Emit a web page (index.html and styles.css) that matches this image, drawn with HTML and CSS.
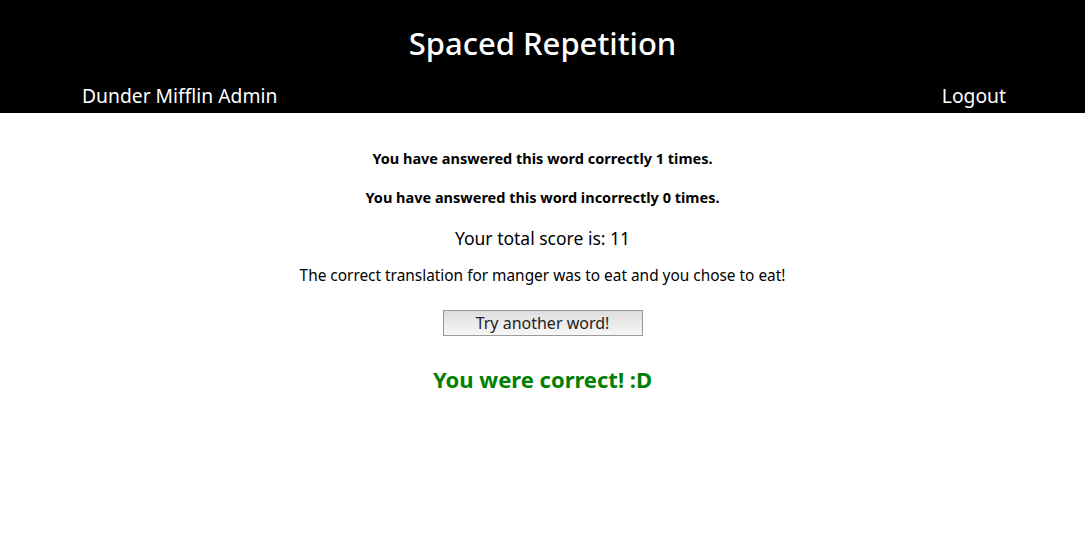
FILE: index.html
```html
<!DOCTYPE html>
<html>
<head>
<meta charset="utf-8">
<link rel="stylesheet" href="styles.css">
</head>
<body>
<header class="site-header">
  <h1 class="title">Spaced Repetition</h1>
  <nav class="nav">
    <span class="nav-user">Dunder Mifflin Admin</span>
    <a class="nav-link" href="#">Logout</a>
  </nav>
</header>
<main class="feedback">
  <h4 class="stat">You have answered this word correctly 1 times.</h4>
  <h4 class="stat">You have answered this word incorrectly 0 times.</h4>
  <p class="score">Your total score is: 11</p>
  <p class="translation">The correct translation for manger was to eat and you chose to eat!</p>
  <button class="next-btn">Try another word!</button>
  <h2 class="result">You were correct! :D</h2>
</main>
</body>
</html>
```
FILE: styles.css
```css
html, body {
  margin: 0;
  padding: 0;
  background: #fff;
  font-family: "Noto Sans", "Open Sans", sans-serif;
}
.site-header {
  background: #000;
  color: #fff;
  height: 113px;
  display: flex;
  flex-direction: column;
  align-items: stretch;
}
.title {
  margin: 0;
  padding-top: 23px;
  font-size: 31px;
  font-weight: 500;
  line-height: 40px;
  text-align: center;
}
.nav {
  display: flex;
  justify-content: space-between;
  padding: 0 79px 0 82px;
  margin-top: 19px;
  font-size: 19.3px;
  line-height: 28px;
}
.nav-link {
  color: #fff;
  text-decoration: none;
}
.feedback {
  display: flex;
  flex-direction: column;
  align-items: center;
  text-align: center;
  color: #000;
}
.stat {
  margin: 0;
  font-size: 14.5px;
  font-weight: 700;
  line-height: 20px;
}
.stat:first-child { margin-top: 35px; }
.stat + .stat { margin-top: 19px; }
.score {
  margin: 19px 0 0;
  font-size: 17.5px;
  line-height: 24px;
}
.translation {
  margin: 16px 0 0;
  font-size: 15.4px;
  line-height: 20px;
}
.next-btn {
  margin-top: 24px;
  width: 200px;
  height: 26px;
  padding: 0;
  font-family: "Noto Sans", "Open Sans", sans-serif;
  font-size: 16px;
  color: #222;
  background: linear-gradient(#dedede, #f6f6f6);
  border: 1px solid #999;
  border-radius: 0;
}
.result {
  margin: 28px 0 0;
  font-size: 22px;
  font-weight: 700;
  color: #008000;
  line-height: 30px;
}
```
